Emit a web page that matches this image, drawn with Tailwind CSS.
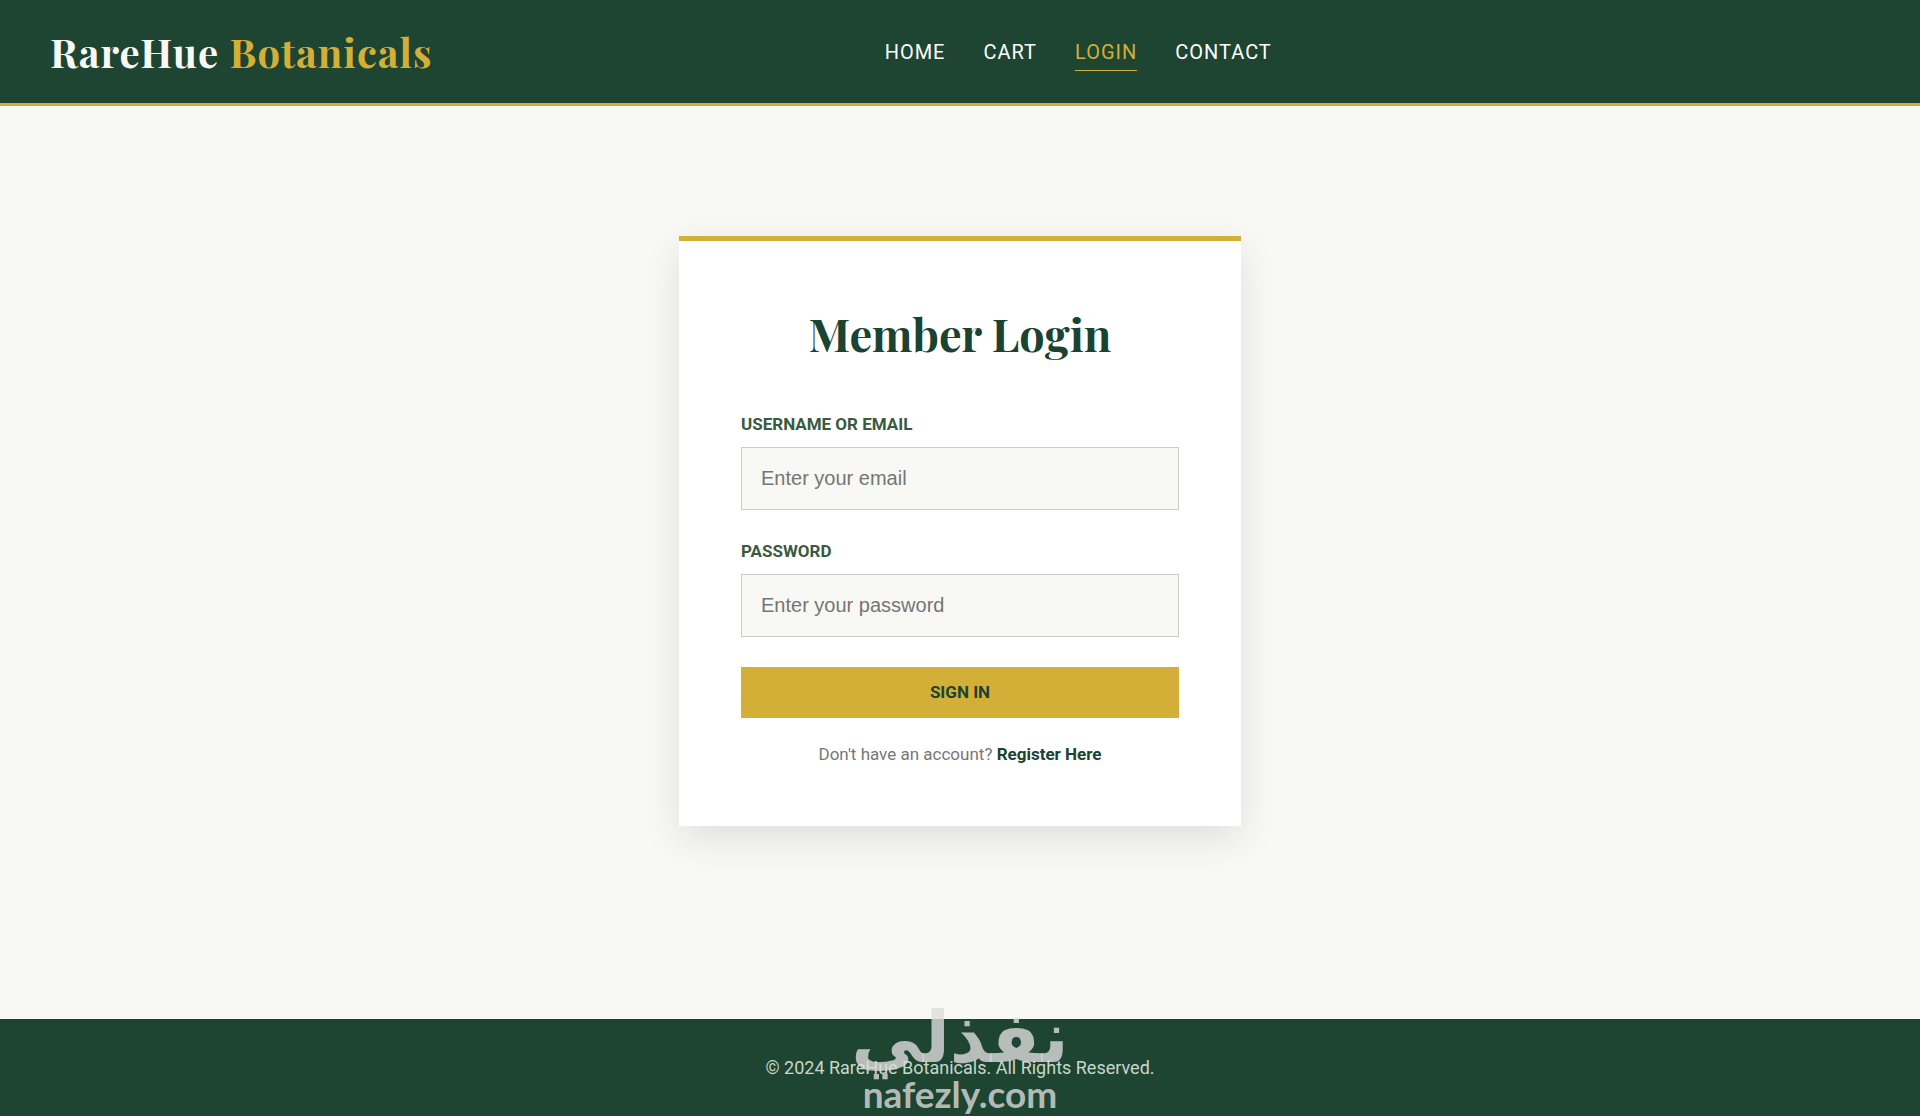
<!DOCTYPE html>
<html lang="en">
<head>
  <meta charset="UTF-8" />
  <meta name="viewport" content="width=device-width, initial-scale=1.0" />
  <title>RareHue Botanicals - Login</title>
  <script src="https://cdn.jsdelivr.net/npm/@tailwindcss/browser@4"></script>
</head>
<body class="flex flex-col min-h-screen bg-[#f8f9f4] font-[Roboto,sans-serif]">

  <header class="flex items-center justify-between px-[50px] py-6 bg-[#1e4432] border-b-3 border-[#d4af37]">
    <a href="#" class="font-['Playfair_Display','Liberation_Serif',serif] text-[40px] leading-[55px] font-bold tracking-[1px] text-[#f8f9f4]">RareHue <span class="text-[#d4af37]">Botanicals</span></a>
    <nav>
      <ul class="flex gap-[38px] text-[20px] leading-6 tracking-[1px] uppercase text-white">
        <li><a href="#" class="block pt-2 pb-1.5 border-b border-transparent">Home</a></li>
        <li><a href="#" class="block pt-2 pb-1.5 border-b border-transparent">Cart</a></li>
        <li><a href="#" class="block pt-2 pb-1.5 border-b border-[#d4af37] text-[#d4af37]">Login</a></li>
        <li><a href="#" class="block pt-2 pb-1.5 border-b border-transparent">Contact</a></li>
      </ul>
    </nav>
    <div class="w-[146px]"></div>
  </header>

  <main class="grow flex items-start justify-center pt-[130px] pb-16">
    <div class="w-full max-w-[562px] px-[62px] py-15 bg-white border-t-5 border-[#d4af37] shadow-[0_12px_36px_rgba(0,0,0,0.1)]">
      <h2 class="mb-12 text-center font-['Playfair_Display','Liberation_Serif',serif] text-[45px] leading-[64px] font-bold text-[#1b4332]">Member Login</h2>

      <form>
        <div class="mb-[30px]">
          <label for="email" class="block mb-3 text-[17px] leading-[22px] font-bold uppercase text-[#3a5a40]">Username or Email</label>
          <input type="text" id="email" name="email" placeholder="Enter your email"
                 class="block w-full h-[63px] px-[19px] border border-[#ccc] bg-[#f8f9f4] font-['Liberation_Sans',sans-serif] text-[20px] placeholder:text-[#757575]" />
        </div>

        <div class="mb-[30px]">
          <label for="password" class="block mb-3 text-[17px] leading-[22px] font-bold uppercase text-[#3a5a40]">Password</label>
          <input type="password" id="password" name="password" placeholder="Enter your password"
                 class="block w-full h-[63px] px-[19px] border border-[#ccc] bg-[#f8f9f4] font-['Liberation_Sans',sans-serif] text-[20px] placeholder:text-[#757575]" />
        </div>

        <button type="submit" class="block w-full h-[51px] bg-[#d4af37] text-[17px] font-bold uppercase text-[#1b4332]">Sign In</button>
      </form>

      <p class="mt-6 text-center text-[17px] leading-6 text-[#777]">Don't have an account? <a href="#" class="font-bold text-[#1b4332]">Register Here</a></p>
    </div>
  </main>

  <footer class="relative py-9 bg-[#1e4432] text-center text-[18px] leading-[25px] text-[#c8d8c8]">
    <p>&copy; 2024 RareHue Botanicals. All Rights Reserved.</p>

    <!-- watermark -->
    <div class="absolute inset-x-0 bottom-1 flex flex-col items-center font-['DejaVu_Sans',sans-serif] font-bold text-[#dcdcdc]/80">
      <span lang="ar" dir="rtl" class="text-[71px] leading-[76px]">نفذلي</span>
      <span class="text-[37px] leading-[36px] font-[Lato,sans-serif]">nafezly.com</span>
    </div>
  </footer>

</body>
</html>
